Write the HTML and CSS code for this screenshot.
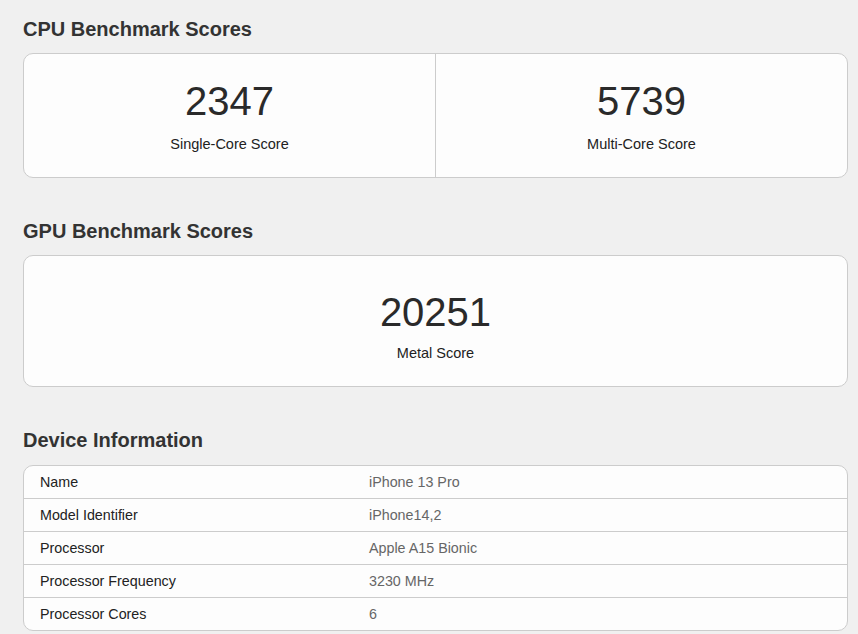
FILE: index.html
```html
<!DOCTYPE html>
<html lang="en">
<head>
    <meta charset="UTF-8">
    <meta name="viewport" content="width=device-width, initial-scale=1.0">
    <title>Benchmark Results</title>
    <link rel="stylesheet" href="styles.css">
</head>
<body>
    <div class="page">
        <section class="section">
            <h2>CPU Benchmark Scores</h2>
            <div class="score-card cpu">
                <div class="score">
                    <div class="score-value">2347</div>
                    <div class="score-label">Single-Core Score</div>
                </div>
                <div class="score">
                    <div class="score-value">5739</div>
                    <div class="score-label">Multi-Core Score</div>
                </div>
            </div>
        </section>

        <section class="section">
            <h2>GPU Benchmark Scores</h2>
            <div class="score-card gpu">
                <div class="score">
                    <div class="score-value">20251</div>
                    <div class="score-label">Metal Score</div>
                </div>
            </div>
        </section>

        <section class="section">
            <h2 class="device-title">Device Information</h2>
            <table class="info-table">
                <tr>
                    <td class="name">Name</td>
                    <td class="value">iPhone 13 Pro</td>
                </tr>
                <tr>
                    <td class="name">Model Identifier</td>
                    <td class="value">iPhone14,2</td>
                </tr>
                <tr>
                    <td class="name">Processor</td>
                    <td class="value">Apple A15 Bionic</td>
                </tr>
                <tr>
                    <td class="name">Processor Frequency</td>
                    <td class="value">3230 MHz</td>
                </tr>
                <tr>
                    <td class="name">Processor Cores</td>
                    <td class="value">6</td>
                </tr>
            </table>
        </section>
    </div>
</body>
</html>
```

FILE: styles.css
```css
body {
    margin: 0;
    background-color: #f0f0f0;
    font-family: "Liberation Sans", Arial, sans-serif;
    color: #333;
}
.page {
    padding: 17px 10px 0 23px;
}
.section {
    margin-bottom: 41px;
}
h2 {
    margin: 0 0 12px;
    font-size: 20px;
    line-height: 24px;
    font-weight: bold;
    color: #333;
}
.device-title {
    margin-bottom: 13px;
}
.score-card {
    display: flex;
    background-color: #fdfdfd;
    border: 1px solid #ccc;
    border-radius: 10px;
}
.score {
    flex: 1;
    display: flex;
    flex-direction: column;
    align-items: center;
}
.score + .score {
    border-left: 1px solid #ccc;
}
.cpu .score {
    height: 123px;
    padding-top: 25px;
    box-sizing: border-box;
}
.gpu .score {
    height: 130px;
    padding-top: 34px;
    box-sizing: border-box;
}
.score-value {
    font-size: 40px;
    line-height: 44px;
    color: #2a2a2a;
}
.score-label {
    margin-top: 12px;
    font-size: 14.5px;
    line-height: 18px;
    color: #222;
}
.gpu .score-label {
    margin-top: 10px;
}
.info-table {
    width: 100%;
    border-collapse: separate;
    border-spacing: 0;
    background-color: #fdfdfd;
    border: 1px solid #ccc;
    border-radius: 10px;
    font-size: 14.3px;
}
.info-table td {
    height: 32px;
    padding: 0 16px;
    border-top: 1px solid #ccc;
}
.info-table tr:first-child td {
    border-top: none;
}
.info-table .name {
    width: 297px;
    color: #222;
}
.info-table .value {
    color: #666;
}
```
